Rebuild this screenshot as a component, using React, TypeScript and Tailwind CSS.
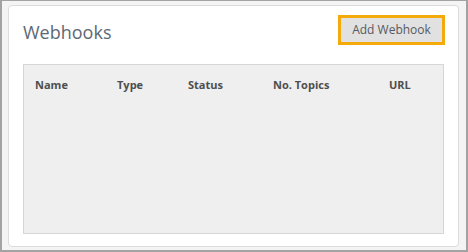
export default function App() {
  const cols = ["Name", "Type", "Status", "No. Topics", "URL"];
  return (
    <div
      className="w-[468px] h-[252px] border-l-2 border-r-2 border-t border-b-2 border-[#a3a3a3] bg-[#f4f4f4] pl-[6px] pr-[6px] pt-[4px] pb-[3px]"
      style={{ fontFamily: '"Open Sans", sans-serif' }}
    >
      <div className="h-[242px] w-[451px] bg-white border border-[#dcdcdc] rounded-[4px] px-[14px] pt-[9px] pb-[12px] flex flex-col">
        <div className="flex items-center justify-between h-[30px]">
          <h2 className="text-[18px] leading-none text-[#5d6873] pt-[4px]">Webhooks</h2>
          <button className="h-[30px] w-[107px] border-[3px] border-[#f4aa0a] bg-[#e1e1e1] text-[12px] text-[#555a60] mr-[-1px]">
            Add Webhook
          </button>
        </div>
        <div className="mt-[19px] flex-1 bg-[#efefef] border border-[#d6d6d6]">
          <div className="grid grid-cols-[82px_71px_85px_116px_1fr] pl-[11px] pt-[12px] text-[11px] font-bold text-[#4e4e4e]">
            {cols.map((c) => (
              <div key={c}>{c}</div>
            ))}
          </div>
        </div>
      </div>
    </div>
  );
}
